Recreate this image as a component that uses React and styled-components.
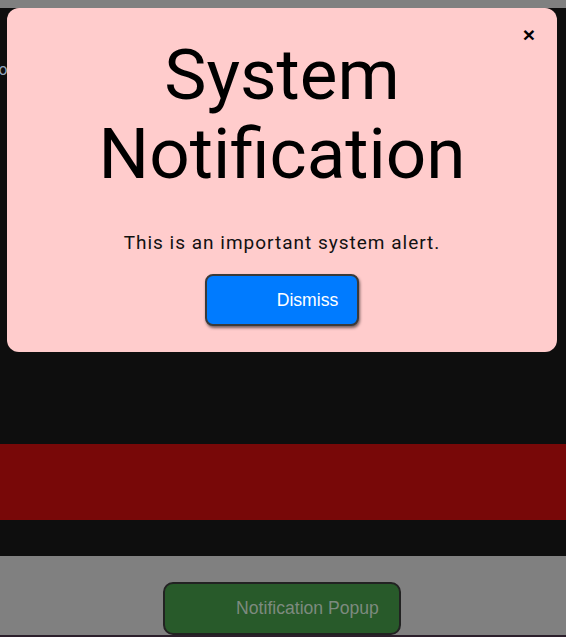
import React from 'react'
import styled, { createGlobalStyle } from 'styled-components'

const GlobalStyle = createGlobalStyle`
    html, body {
        margin: 0;
        padding: 0;
        background: #808080;
    }
    body {
        font-family: "Liberation Sans", Arial, sans-serif;
        overflow: hidden;
    }
`

const Page = styled.div`
    position: relative;
    display: flex;
    flex-direction: column;
    padding-top: 8px;
    min-height: 637px;
    box-sizing: border-box;
`

const Stage = styled.section`
    display: flex;
    flex-direction: column;
    background: #0e0e0e;
    height: 548px;
    overflow: hidden;
`

const Caption = styled.p`
    margin: 52px 0 0 -25px;
    font-family: Roboto, sans-serif;
    font-size: 16px;
    color: #93a6bd;
    white-space: nowrap;
`

const Band = styled.div`
    margin-top: auto;
    margin-bottom: 36px;
    height: 76px;
    background: #780808;
`

const Footer = styled.section`
    display: flex;
    flex-direction: column;
    align-items: center;
    padding-top: 26px;
    padding-right: 2px;
    background: #808080;
    flex: 1;
`

const LaunchButton = styled.button`
    height: 53px;
    padding: 0 20px 0 71px;
    background: #285a2a;
    color: #7d8a7f;
    border: 2px solid #222;
    border-radius: 10px;
    font-family: "Liberation Sans", Arial, sans-serif;
    font-size: 17.6px;
`

const Baseline = styled.div`
    height: 4px;
    background: #2b1f2b;
    align-self: stretch;
    margin-right: -2px;
`

const Popup = styled.div`
    position: absolute;
    top: 8px;
    left: 7px;
    width: 550px;
    height: 344px;
    box-sizing: border-box;
    display: flex;
    flex-direction: column;
    align-items: center;
    padding-top: 27px;
    background: #ffcccc;
    border-radius: 12px;
`

const Close = styled.span`
    position: absolute;
    top: 15px;
    right: 22px;
    font-family: "Liberation Sans", Arial, sans-serif;
    font-weight: 700;
    font-size: 21px;
    color: #000;
    cursor: pointer;
`

const Title = styled.h1`
    margin: 0;
    font-family: Roboto, sans-serif;
    font-weight: 400;
    font-size: 71px;
    line-height: 79px;
    text-align: center;
    color: #000;
`

const Message = styled.p`
    margin: 38px 0 0;
    font-family: Roboto, sans-serif;
    font-size: 19px;
    letter-spacing: 1px;
    color: #111;
`

const DismissButton = styled.button`
    margin-top: 20px;
    height: 52px;
    padding: 0 19px 0 70px;
    background: #007bff;
    color: #fff;
    border: 2px solid #3a3a3a;
    border-radius: 8px;
    box-shadow: 1px 2px 3px rgba(0, 0, 0, 0.55);
    font-family: "Liberation Sans", Arial, sans-serif;
    font-size: 17.6px;
`

export default function App() {
    return (
        <>
            <GlobalStyle />
            <Page>
                <Stage>
                    <Caption>Color settings</Caption>
                    <Band />
                </Stage>
                <Footer>
                    <LaunchButton>Notification Popup</LaunchButton>
                    <Baseline />
                </Footer>
                <Popup>
                    <Close>×</Close>
                    <Title>System<br />Notification</Title>
                    <Message>This is an important system alert.</Message>
                    <DismissButton>Dismiss</DismissButton>
                </Popup>
            </Page>
        </>
    )
}
